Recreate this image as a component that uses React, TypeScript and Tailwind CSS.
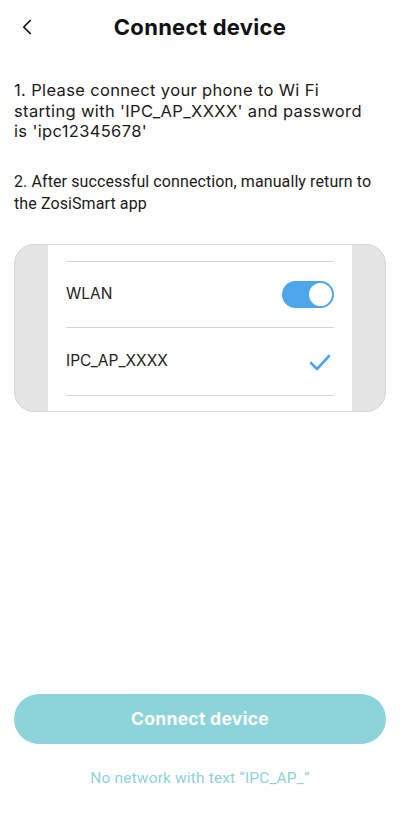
import { ChevronLeft } from "lucide-react"

export default function App() {
  return (
    <div className="w-[411px] h-[828px] bg-white flex flex-col text-[#111]" style={{ fontFamily: "Inter, 'Noto Sans', sans-serif" }}>
      <header className="relative h-[54px] flex items-center justify-center pr-[11px]">
        <button className="absolute left-[14px] top-[14px] text-[#111]">
          <ChevronLeft size={26} strokeWidth={1.6} />
        </button>
        <h1 className="text-[22px] font-bold tracking-[0.3px]">Connect device</h1>
      </header>

      <p className="mt-[26px] px-[14px] text-[16.5px] leading-[20.5px] tracking-[0.35px] text-[#1a1a1a]">
        1. Please connect your phone to Wi Fi<br />
        starting with 'IPC_AP_XXXX' and password<br />
        is 'ipc12345678'
      </p>

      <p className="mt-[29px] px-[14px] text-[16px] leading-[22px] tracking-[0.1px] text-[#1a1a1a]" style={{ fontFamily: "Roboto, 'Noto Sans', sans-serif" }}>
        2. After successful connection, manually return to<br />
        the ZosiSmart app
      </p>

      <div className="mt-[29px] ml-[14px] mr-[25px] h-[168px] rounded-[20px] border border-[#d6d6d6] bg-[#e5e5e5] overflow-hidden flex">
        <div className="ml-[33px] w-[304px] bg-white flex flex-col px-[18px] pt-[16px]">
          <div className="h-px bg-[#d4d4d4]" />
          <div className="h-[65px] flex items-center justify-between">
            <span className="text-[15.5px] text-[#222]">WLAN</span>
            <div className="w-[52px] h-[27px] rounded-full bg-[#4ea6ea] flex items-center justify-end pr-[2px]">
              <div className="w-[23px] h-[23px] rounded-full bg-white" />
            </div>
          </div>
          <div className="h-px bg-[#d4d4d4]" />
          <div className="h-[67px] flex items-center justify-between">
            <span className="text-[15.5px] text-[#222]">IPC_AP_XXXX</span>
            <svg width="22" height="18" viewBox="0 0 22 18" className="mr-[3px] mt-[2px]">
              <path d="M2 10 L8 16 L20 3" fill="none" stroke="#4ea6ea" strokeWidth="2.6" strokeLinecap="round" strokeLinejoin="round" />
            </svg>
          </div>
          <div className="h-px bg-[#d4d4d4]" />
        </div>
      </div>

      <div className="flex-1" />

      <button className="ml-[14px] mr-[25px] h-[50px] rounded-full bg-[#8dd4da] text-white text-[17.5px] font-bold tracking-[0.3px]">
        Connect device
      </button>
      <p className="mt-[23px] mb-[38px] pr-[11px] text-center text-[15.5px] tracking-[0.15px] text-[#8fd2d9]" style={{ fontFamily: "Roboto, 'Noto Sans', sans-serif" }}>
        No network with text “IPC_AP_”
      </p>
    </div>
  )
}
